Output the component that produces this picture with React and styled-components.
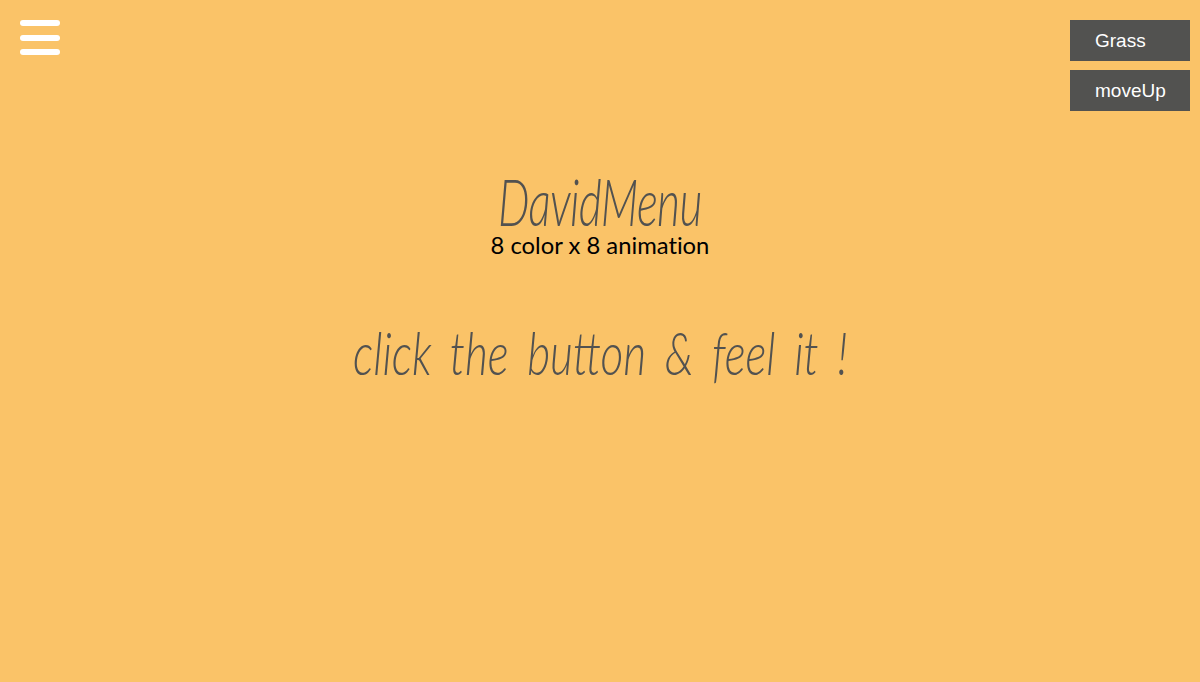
import React from 'react'
import styled, { createGlobalStyle } from 'styled-components'

const GlobalStyle = createGlobalStyle`
html, body {
  margin: 0;
  padding: 0;
  height: 100%;
  background: #fac368;
  overflow: hidden;
}
`

const Page = styled.div`
width: 1200px;
height: 682px;
display: flex;
flex-direction: column;
`

const TopBar = styled.div`
display: flex;
justify-content: space-between;
align-items: flex-start;
padding: 20px 10px 0 20px;
height: 91px;
`

const Burger = styled.div`
width: 40px;
height: 35px;
display: flex;
flex-direction: column;
justify-content: space-between;
`

const BurgerLine = styled.span`
display: block;
height: 6px;
background: #fff;
border-radius: 3px;
`

const Controls = styled.div`
display: flex;
flex-direction: column;
gap: 9px;
`

const ControlButton = styled.button`
width: 120px;
height: 41px;
border: 0;
padding: 1px 0 0 25px;
text-align: left;
background: #525250;
color: #fff;
font-family: "Liberation Sans", Arial, sans-serif;
font-size: 19px;
`

const Main = styled.div`
display: flex;
flex-direction: column;
align-items: center;
`

const Title = styled.h1`
margin: 60px 0 0;
height: 59px;
font-family: "Lato", sans-serif;
font-style: italic;
font-weight: 300;
font-size: 66px;
line-height: 59px;
color: #525250;
letter-spacing: -1px;
transform: scaleX(0.675);
`

const Subtitle = styled.p`
margin: 0;
height: 30px;
font-family: "Lato", sans-serif;
font-size: 23.8px;
line-height: 30px;
font-variant-ligatures: none;
color: #000;
`

const Hint = styled.p`
margin: 59px 0 0;
font-family: "Lato", sans-serif;
font-style: italic;
font-weight: 300;
font-size: 60px;
line-height: 66px;
word-spacing: 10px;
white-space: nowrap;
color: #525250;
transform: scaleX(0.74);
`

export default function App() {
  return (
    <Page>
      <GlobalStyle />
      <TopBar>
        <Burger>
          <BurgerLine />
          <BurgerLine />
          <BurgerLine />
        </Burger>
        <Controls>
          <ControlButton>Grass</ControlButton>
          <ControlButton>moveUp</ControlButton>
        </Controls>
      </TopBar>
      <Main>
        <Title>DavidMenu</Title>
        <Subtitle>8 color x 8 animation</Subtitle>
        <Hint>click the button &amp; feel it !</Hint>
      </Main>
    </Page>
  )
}
